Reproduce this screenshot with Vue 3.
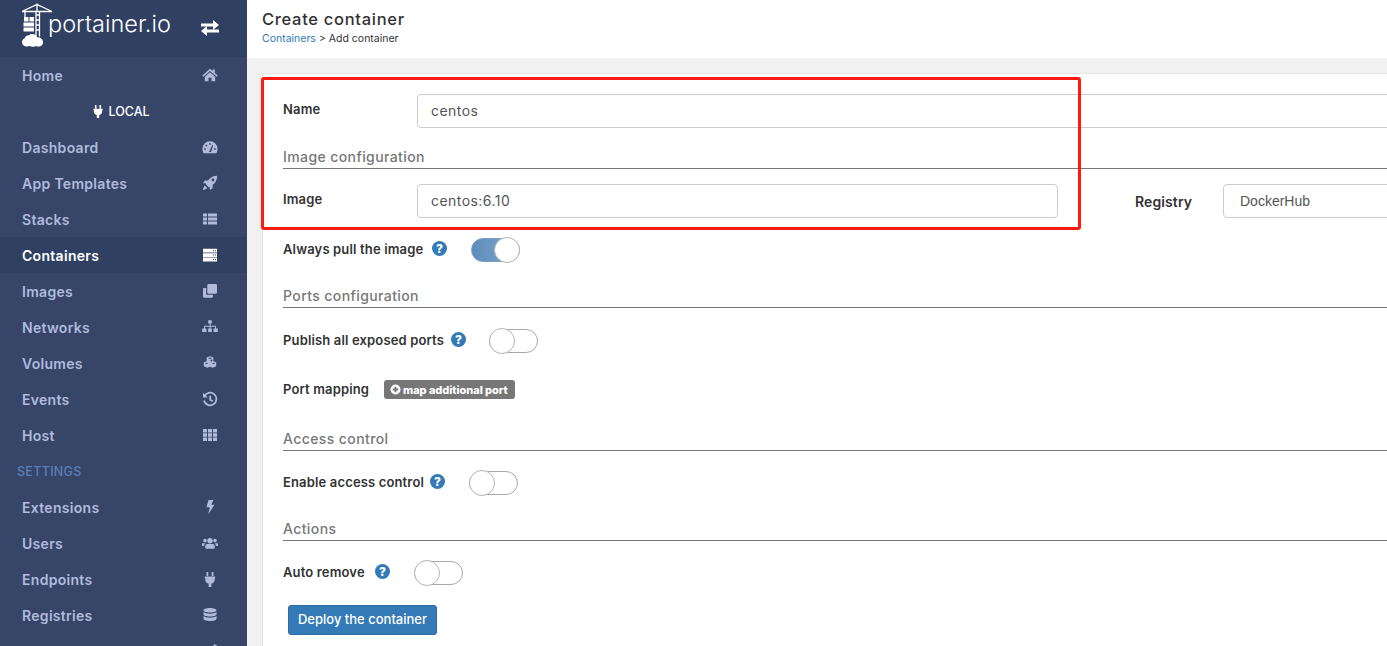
<script setup>
const icons = {
  home: { d: 'M8 1.800l2.600 2.300V2.600h2.200v3.400l2.900 2.600-.9 1.100L8 3.900 1.200 9.700.3 8.600zM8 5.200l5.200 4.500v4.600H9.500v-3.500h-3v3.500H2.800V9.700z' },
  dash: { d: 'M8 2.200A7.600 7.600 0 0 0 .4 9.800c0 1.600.4 3.100 1.200 4.400h12.800c.8-1.300 1.200-2.800 1.200-4.400A7.600 7.600 0 0 0 8 2.200zM7.200 4.200h1.600v1.600H7.200zM3.600 5.700h1.600v1.600H3.600zM2.200 9.200h1.600v1.600H2.200zM12.200 9.200h1.600v1.600h-1.600zM7 13h2l2.200-6.600-.8-.3z' },
  rocket: { d: 'M15.200.8C11.300.9 8.200 2.400 6 5.400H2.800L1 8.200h3l-.4.9 3.300 3.300.9-.4v3l2.800-1.800v-3.200c3-2.200 4.500-5.300 4.600-9.200zM11 3.600a1.400 1.400 0 1 1 0 2.800 1.400 1.400 0 0 1 0-2.800zM3 10.800c-1 .6-1.700 2-2 4.200 2.200-.3 3.600-1 4.200-2z' },
  list: { d: 'M1 2.500h4v3H1zM6 2.500h9v3H6zM1 6.500h4v3H1zM6 6.500h9v3H6zM1 10.500h4v3H1zM6 10.500h9v3H6z' },
  server: { d: 'M1 1.800h14v3.800H1zM11 3.200v1h1v-1zM13 3.200v1h1v-1zM1 6.200h14v3.800H1zM11 7.600v1h1v-1zM13 7.600v1h1v-1zM1 10.600h14v3.800H1zM11 12v1h1v-1zM13 12v1h1v-1z' },
  clone: { d: 'M6.500 1h7.300c.7 0 1.200.5 1.200 1.200v7.300c0 .7-.5 1.200-1.200 1.200H6.500c-.7 0-1.200-.5-1.200-1.200V2.200c0-.7.5-1.200 1.200-1.200zM4.200 5v5.800c0 .6.4 1 1 1h5.800v1.800c0 .7-.5 1.200-1.200 1.200H2.200c-.7 0-1.200-.5-1.200-1.200V6.200C1 5.500 1.500 5 2.200 5z' },
  sitemap: { d: 'M6.200 1.200h3.600v3.400H8.600v2.200H14v2.800h1.800v3.400h-4.200V9.600h1.500V7.800H8.600v1.800h1.200v3.400H6.200V9.600h1.400V7.800H2.900v1.800h1.500v3.400H.2V9.600H2V6.800h5.600V4.600H6.200z' },
  cubes: { d: 'M8 1.200l3.400 1.300v3.700l2.800 1.100v4l-3.500 1.500L8 11.700l-2.700 1.100-3.500-1.500v-4l2.800-1.100V2.500zM8 2.600L6 3.300l2 .8 2-.8zM4.600 7.700l-1.700.6 1.700.7 1.700-.7zM11.400 7.700l-1.700.6 1.700.7 1.700-.7zM8.600 5v1.800l1.800-.7V4.300z' },
  hist: { s: 'M2.300 5.500A6.300 6.300 0 1 1 2 9.500M8.200 4.800v3.900l2.500 1.500', d: 'M1 1.800l4.700 4.700H1z' },
  grid: { d: 'M1 2h4v3.500H1zM6 2h4v3.500H6zM11 2h4v3.500h-4zM1 6.300h4v3.500H1zM6 6.300h4v3.500H6zM11 6.300h4v3.500h-4zM1 10.500h4V14H1zM6 10.500h4V14H6zM11 10.500h4V14h-4z' },
  bolt: { d: 'M6.500 1h5L9.200 5.700h3.300L6.200 15.500l1.600-7.200H4.500z' },
  users: { d: 'M8 3a2.700 2.700 0 1 1 0 5.400A2.700 2.700 0 0 1 8 3zM3 3.800a1.800 1.800 0 1 1 0 3.600 1.800 1.800 0 0 1 0-3.600zM13 3.800a1.800 1.800 0 1 1 0 3.600 1.800 1.800 0 0 1 0-3.600zM5.500 9h5c1.500 0 2.300 1.200 2.300 3v.8c0 .5-.4.900-1 .9H4.200c-.6 0-1-.4-1-.9V12c0-1.800.8-3 2.300-3zM.2 8.300h3.200c-.8.600-1.300 1.500-1.400 2.800H.9c-.5 0-.9-.3-.9-.8v-.8c0-.5.1-.9.200-1.200zM12.600 8.300h3.200c.1.300.2.700.2 1.200v.8c0 .5-.4.800-.9.800H14c-.1-1.300-.6-2.200-1.400-2.800z' },
  plug: { d: 'M4.500 1h1.800v4H4.500zM9.700 1h1.800v4H9.700zM2.800 5.500h10.400v1.700h-.5v1.500c0 2-1.300 3.500-3.300 3.900V16H6.600v-3.400c-2-.4-3.300-1.900-3.300-3.900V7.200h-.5z' },
  db: { d: 'M8 1c3.600 0 6.500 1 6.500 2.300S11.600 5.600 8 5.600 1.500 4.600 1.500 3.300 4.400 1 8 1zM1.500 5c1.200 1.100 3.700 1.700 6.500 1.700s5.300-.6 6.500-1.700v2.300C14.500 8.600 11.600 9.600 8 9.600S1.500 8.600 1.500 7.300zM1.500 9c1.200 1.100 3.700 1.700 6.500 1.700s5.300-.6 6.500-1.700v2.700c0 1.300-2.900 2.300-6.500 2.300s-6.500-1-6.500-2.300z' },
  cogs: { d: 'M5.500 3l1 1.200 1.500-.2.400 1.500 1.400.7-.6 1.400.6 1.400-1.400.7-.4 1.500-1.500-.2-1 1.200-1-1.200-1.500.2-.4-1.500-1.400-.7.6-1.400-.6-1.400 1.400-.7.4-1.500 1.500.2zM5 6a1.600 1.600 0 1 0 0 3.200A1.600 1.600 0 0 0 5 6zM12 1l1.200.8 1.300-.1.200 1.300 1 .8-.8 1.100-.2 1.300-1.300 0-1.100.8-.8-1-1.300-.3.300-1.300-.3-1.300 1.300-.4z' },
}
const nav1 = [
  { t: 'Dashboard', i: 'dash' }, { t: 'App Templates', i: 'rocket' }, { t: 'Stacks', i: 'list' },
  { t: 'Containers', i: 'server', on: true }, { t: 'Images', i: 'clone' }, { t: 'Networks', i: 'sitemap' },
  { t: 'Volumes', i: 'cubes' }, { t: 'Events', i: 'hist' }, { t: 'Host', i: 'grid' },
]
const nav2 = [
  { t: 'Extensions', i: 'bolt' }, { t: 'Users', i: 'users' }, { t: 'Endpoints', i: 'plug' },
  { t: 'Registries', i: 'db' }, { t: 'Settings', i: 'cogs' },
]
</script>

<template>
  <div class="page">
    <aside class="side">
      <div class="brand">
        <svg class="crane" viewBox="0 0 31 44" width="31" height="44">
          <path d="M0 8.500L15 1.500l15 7M0 8.500h30M15 .5v8M14 8.500v25M17.500 8.500v25M14 12h3.500M14 17h3.500M14 22h3.500M14 27h3.500M3 8.500v8" fill="none" stroke="#fff" stroke-width="1.300" />
          <path d="M2 14h4.500v4.500H2zM7.500 14H12v4.500H7.500zM1.500 19.500H12v4H1.500zM1.500 24.500H12v4H1.500z" fill="#fff" />
          <path d="M5 43.500c-3 0-5-1.800-5-4.300 0-1.800 1-3 2.500-3.700C3 33.300 5 32 7 32.200c1-1 2.500-1.500 4-1.200 2.300.3 3.700 1.600 4.200 3.400 2.600-.3 5.500 1.500 5.800 4.300.3 2.800-1.800 4.800-4.500 4.800-1.200 0-2-.2-2.800-.6-1 .6-2 .9-3.200.9s-2.200-.3-3-.8c-.7.3-1.500.5-2.500.5z" fill="#fff" />
        </svg>
        <span class="brand-text">portainer.io</span>
        <svg class="swap" viewBox="0 0 18 16" width="18" height="16">
          <path d="M0 3.500h12V0l6 5-6 5V6.500H0zM18 9.500H6V6L0 11l6 5v-3.500h12z" fill="#fff" />
        </svg>
      </div>
      <div class="nav-row">
        <span class="nav-label">Home</span>
        <svg class="nav-icon" viewBox="0 0 16 16" width="16" height="16"><path :d="icons.home.d" fill="currentColor" fill-rule="evenodd" /></svg>
      </div>
      <div class="endpoint">
        <svg viewBox="0 0 16 16" width="14" height="14"><path :d="icons.plug.d" fill="#fff" /></svg>
        <span>LOCAL</span>
      </div>
      <div v-for="n in nav1" :key="n.t" class="nav-row" :class="{ active: n.on }">
        <span class="nav-label">{{ n.t }}</span>
        <svg class="nav-icon" viewBox="0 0 16 16" width="16" height="16">
          <path v-if="icons[n.i].d" :d="icons[n.i].d" fill="currentColor" fill-rule="evenodd" />
          <path v-if="icons[n.i].s" :d="icons[n.i].s" fill="none" stroke="currentColor" stroke-width="1.800" />
        </svg>
      </div>
      <div class="side-title">SETTINGS</div>
      <div v-for="n in nav2" :key="n.t" class="nav-row">
        <span class="nav-label">{{ n.t }}</span>
        <svg class="nav-icon" viewBox="0 0 16 16" width="16" height="16"><path :d="icons[n.i].d" fill="currentColor" fill-rule="evenodd" /></svg>
      </div>
    </aside>

    <main class="main">
      <header class="top">
        <h1>Create container</h1>
        <p><a>Containers</a> &gt; Add container</p>
      </header>
      <section class="panel">
        <div class="mark"></div>

        <div class="row field">
          <label class="lab">Name</label>
          <div class="input wide">centos</div>
        </div>
        <div class="sec s1">Image configuration</div>
        <div class="row field m15">
          <label class="lab">Image</label>
          <div class="input image">centos:6.10</div>
          <label class="reg-lab">Registry</label>
          <div class="select">DockerHub</div>
        </div>

        <div class="row tog-row m19">
          <span class="lbl w-pull">Always pull the image</span>
          <span class="help">?</span>
          <span class="toggle on g-24"><i></i></span>
        </div>
        <div class="sec s2">Ports configuration</div>
        <div class="row tog-row m20">
          <span class="lbl w-pub">Publish all exposed ports</span>
          <span class="help">?</span>
          <span class="toggle g-23"><i></i></span>
        </div>
        <div class="row map-row">
          <span class="lbl w-map">Port mapping</span>
          <span class="mini">
            <svg viewBox="0 0 12 12" width="11" height="11"><path fill-rule="evenodd" fill="#fff" d="M6 .5a5.500 5.500 0 1 1 0 11 5.500 5.500 0 0 1 0-11zM5 3v2H3v2h2v2h2V7h2V5H7V3z" /></svg>
            map additional port
          </span>
        </div>
        <div class="sec s3">Access control</div>
        <div class="row tog-row m19">
          <span class="lbl w-acc">Enable access control</span>
          <span class="help">?</span>
          <span class="toggle g-24"><i></i></span>
        </div>
        <div class="sec s2">Actions</div>
        <div class="row tog-row m19">
          <span class="lbl w-auto">Auto remove</span>
          <span class="help">?</span>
          <span class="toggle g-24"><i></i></span>
        </div>
        <button class="deploy">Deploy the container</button>
      </section>
    </main>
  </div>
</template>

<style>
html, body { margin: 0; height: 100%; overflow: hidden; background: #f1f1f1; }
</style>

<style scoped>
.page {
  display: flex; width: 1387px; height: 646px; overflow: hidden;
  font-family: Inter, "Open Sans", "Liberation Sans", sans-serif;
  color: #333;
}
.side { width: 247px; flex: none; background: #364568; color: #b0bbdc; overflow: hidden; }
.brand { height: 57px; background: #304063; display: flex; align-items: flex-start; }
.crane { margin: 3px 0 0 22px; flex: none; }
.brand-text { color: #fff; font-size: 23.500px; font-weight: 300; line-height: 30px; margin: 9px 0 0 -5px; width: 126px; white-space: nowrap; }
.swap { margin: 20px 0 0 27px; flex: none; }
.nav-row { height: 36px; display: flex; align-items: center; padding-left: 22px; }
.nav-label { flex: 1; font-size: 14px; font-weight: 600; letter-spacing: .3px; }
.nav-icon { margin-right: 29px; flex: none; }
.active { background: #304063; color: #fff; }
.endpoint { height: 36px; display: flex; align-items: center; justify-content: center; gap: 3px; padding-right: 6px; box-sizing: border-box; color: #fff; font-size: 12.500px; font-weight: 500; }
.side-title { height: 36px; line-height: 38px; padding-left: 17px; font-size: 12.500px; font-weight: 500; letter-spacing: .3px; color: #5c7fb8; }

.main { flex: 1; min-width: 0; }
.top { height: 58px; background: #fff; padding-left: 15px; box-sizing: border-box; }
.top h1 { margin: 0; padding-top: 10px; font-size: 16.500px; line-height: 19px; font-weight: 500; color: #333; letter-spacing: .7px; }
.top p { margin: 3px 0 0; font-size: 10.500px; line-height: 14px; color: #333; }
.top a { color: #337ab7; }
.panel {
  position: relative; margin: 15px -10px 0 15px; height: 600px; box-sizing: border-box;
  background: #fff; border: 1px solid #e4e4e4; padding: 20px 0 0 20px;
}
.mark {
  position: absolute; left: -2px; top: 3px; width: 820px; height: 153px; box-sizing: border-box;
  border: 3px solid #ff1a10; border-radius: 3px; pointer-events: none; z-index: 2;
}
.row { display: flex; align-items: center; }
.field { height: 34px; }
.lab { width: 134px; flex: none; font-size: 13px; font-weight: 600; letter-spacing: .15px; color: #333; position: relative; bottom: 2px; }
.input, .select {
  height: 34px; box-sizing: border-box; border: 1px solid #ccc; border-radius: 4px;
  padding-left: 13px; line-height: 32px; font-size: 14px; color: #555; background: #fff; letter-spacing: .45px;
}
.wide { flex: 1; }
.image { width: 641px; flex: none; }
.reg-lab { margin-left: 77px; width: 88px; flex: none; font-size: 14px; font-weight: 600; letter-spacing: .1px; color: #333; }
.select { flex: 1; padding-left: 16px; font-family: "Liberation Sans", Arial, sans-serif; letter-spacing: 0; }
.sec {
  height: 24px; box-sizing: border-box; border-bottom: 1px solid #777; line-height: 24px;
  font-size: 14px; font-weight: 500; color: #777; letter-spacing: .4px;
}
.s1 { margin-top: 17px; }
.s2 { margin-top: 21px; }
.s3 { margin-top: 28px; }
.m15 { margin-top: 15px; }
.m19 { margin-top: 19px; }
.m20 { margin-top: 20px; }
.tog-row { height: 26px; }
.lbl { flex: none; font-size: 13px; font-weight: 600; letter-spacing: .15px; color: #333; white-space: nowrap; position: relative; bottom: 1px; }
.w-pull { width: 149px; }
.w-pub { width: 168px; }
.w-acc { width: 147px; }
.w-auto { width: 92px; }
.w-map { width: 101px; }
.help {
  flex: none; width: 15px; height: 15px; border-radius: 50%; background: #337ab7; color: #fff;
  font-size: 12px; font-weight: 800; line-height: 15px; text-align: center; position: relative; bottom: 2px;
}
.toggle {
  flex: none; width: 49px; height: 24px; box-sizing: border-box; border: 1px solid #a8a8a8; border-radius: 12px;
  background: #fff; position: relative;
}
.toggle i {
  position: absolute; left: -1px; top: -2px; width: 26px; height: 26px; box-sizing: border-box;
  border-radius: 50%; background: #fff; border: 1px solid #b5b5b5;
}
.toggle.on { background: linear-gradient(90deg, #5c8cba, #84a9d0); border-color: #7a9fc6; }
.toggle.on i { left: auto; right: -1px; }
.g-24 { margin-left: 24px; }
.g-23 { margin-left: 23px; }
.map-row { height: 19px; margin-top: 26px; }
.mini {
  display: inline-flex; align-items: center; gap: 2px; height: 19px; width: 131px; box-sizing: border-box; padding-left: 6px;
  background: #777; color: #fff; border-radius: 3px; font-size: 11px; font-weight: 800; letter-spacing: -.05px; white-space: nowrap;
}
.deploy {
  display: block; margin: 19px 0 0 5px; width: 149px; height: 30px; padding: 0 0 2px;
  background: #337ab7; border: 1px solid #2e6da4; border-radius: 3px; color: #fff;
  font-family: inherit; font-size: 13px; font-weight: 500;
}
</style>
